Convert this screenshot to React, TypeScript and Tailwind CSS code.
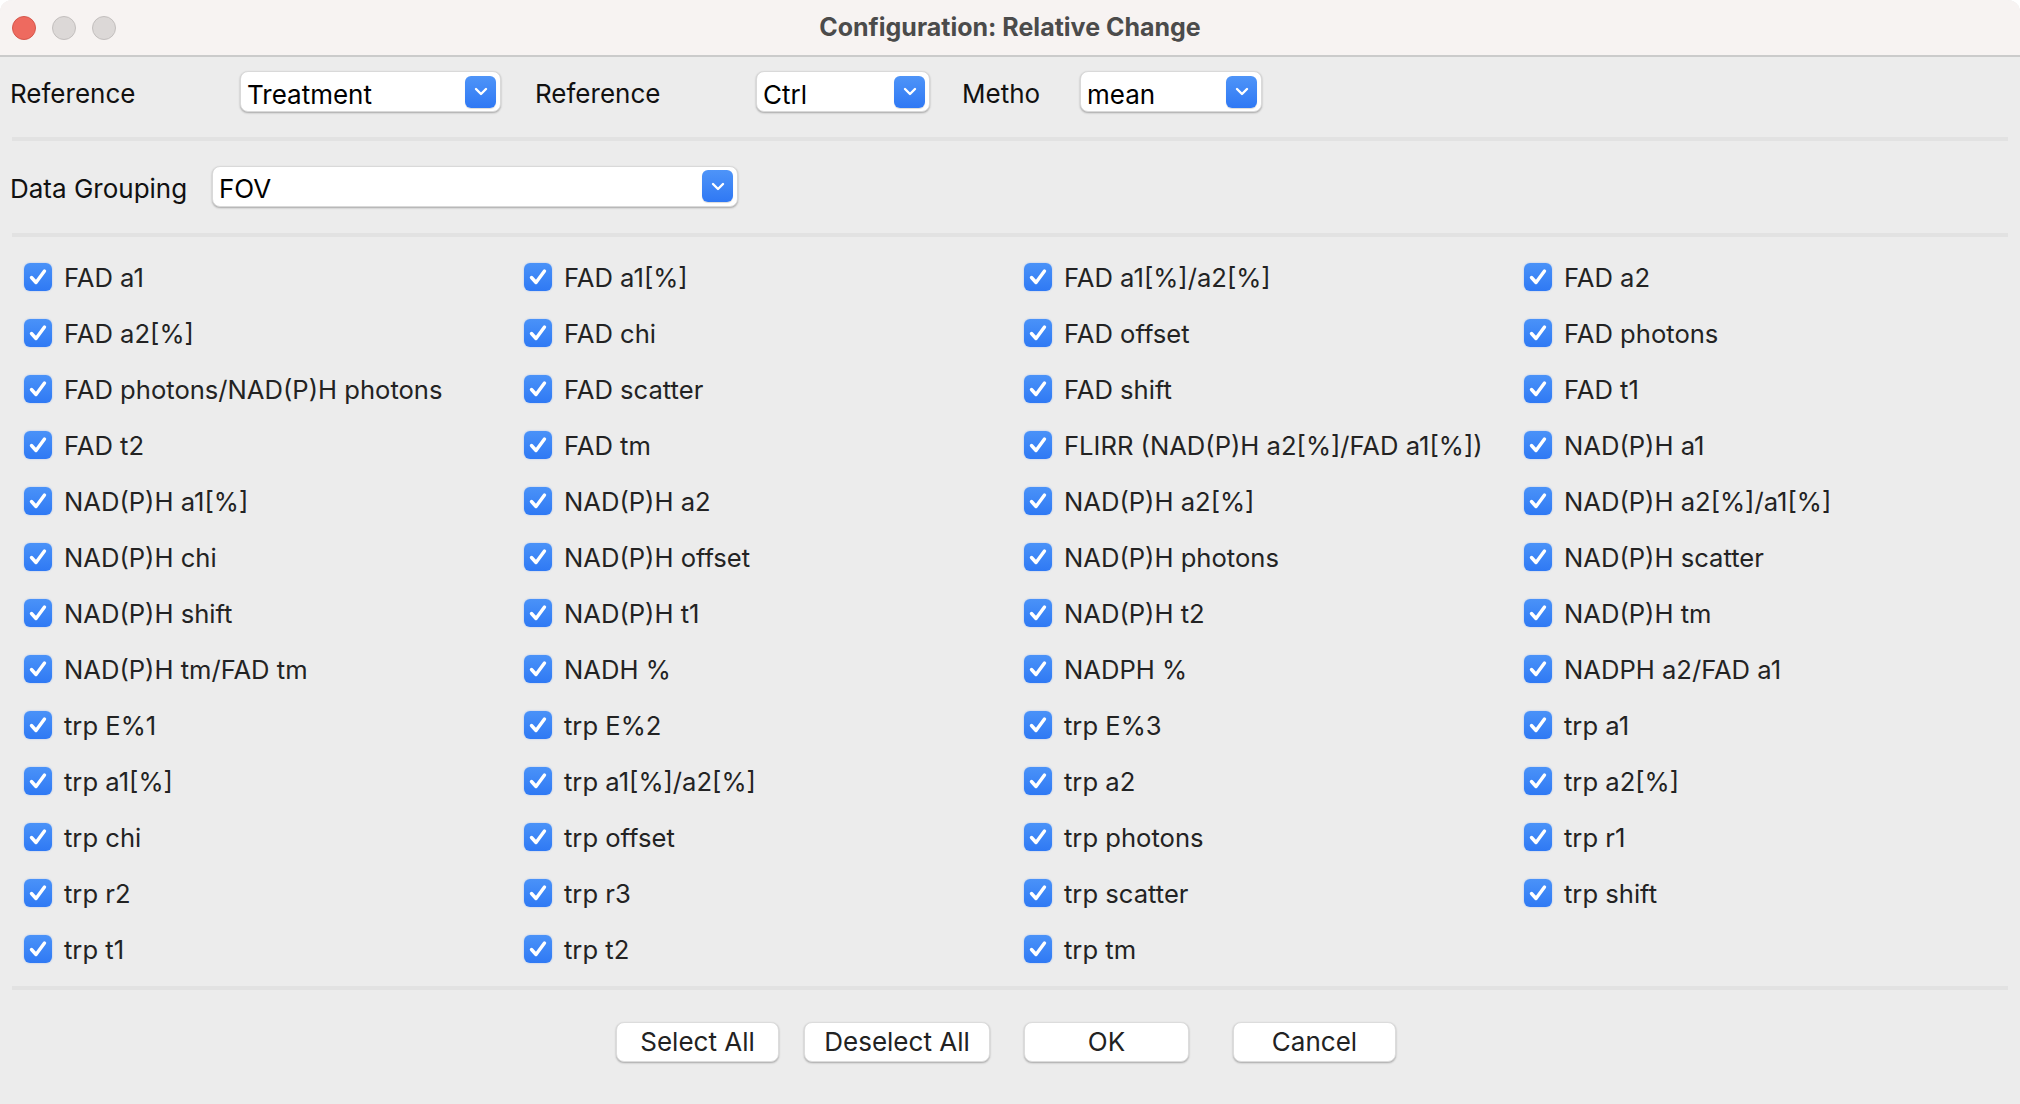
import React from 'react';

const rows: (string | null)[][] = [
  ['FAD a1', 'FAD a1[%]', 'FAD a1[%]/a2[%]', 'FAD a2'],
  ['FAD a2[%]', 'FAD chi', 'FAD offset', 'FAD photons'],
  ['FAD photons/NAD(P)H photons', 'FAD scatter', 'FAD shift', 'FAD t1'],
  ['FAD t2', 'FAD tm', 'FLIRR (NAD(P)H a2[%]/FAD a1[%])', 'NAD(P)H a1'],
  ['NAD(P)H a1[%]', 'NAD(P)H a2', 'NAD(P)H a2[%]', 'NAD(P)H a2[%]/a1[%]'],
  ['NAD(P)H chi', 'NAD(P)H offset', 'NAD(P)H photons', 'NAD(P)H scatter'],
  ['NAD(P)H shift', 'NAD(P)H t1', 'NAD(P)H t2', 'NAD(P)H tm'],
  ['NAD(P)H tm/FAD tm', 'NADH %', 'NADPH %', 'NADPH a2/FAD a1'],
  ['trp E%1', 'trp E%2', 'trp E%3', 'trp a1'],
  ['trp a1[%]', 'trp a1[%]/a2[%]', 'trp a2', 'trp a2[%]'],
  ['trp chi', 'trp offset', 'trp photons', 'trp r1'],
  ['trp r2', 'trp r3', 'trp scatter', 'trp shift'],
  ['trp t1', 'trp t2', 'trp tm', null],
];

function Chevron() {
  return (
    <svg width="14" height="9" viewBox="0 0 14 9" fill="none">
      <path d="M2 2 L7 7 L12 2" stroke="white" strokeWidth="2.4" strokeLinecap="round" strokeLinejoin="round" />
    </svg>
  );
}

function Select({ value, width }: { value: string; width: string }) {
  return (
    <div
      className={`${width} h-[41px] flex items-center justify-between bg-white rounded-[8px] border border-[#d9d9d9] shadow-[0_1px_2px_rgba(0,0,0,0.3)] pl-[6px] pr-[4px]`}
    >
      <span className="text-[26px] leading-none text-black pt-[6px]">{value}</span>
      <div className="w-[31px] h-[32px] rounded-[6px] bg-gradient-to-b from-[#4e94f8] to-[#2f78f4] flex items-center justify-center shadow-[0_1px_1px_rgba(0,0,0,0.15)]">
        <Chevron />
      </div>
    </div>
  );
}

function CheckBox() {
  return (
    <div className="w-[28px] h-[28px] rounded-[6px] bg-gradient-to-b from-[#4a92f8] to-[#2f79f4] flex items-center justify-center shadow-[0_0_2px_rgba(47,121,244,0.4)]">
      <svg width="20" height="18" viewBox="0 0 20 18" fill="none">
        <path d="M3.5 9.5 L8 14.5 L16.5 3" stroke="white" strokeWidth="3.4" strokeLinecap="round" strokeLinejoin="round" />
      </svg>
    </div>
  );
}

function Separator() {
  return <div className="mx-[12px] h-[4px] bg-[#e2e2e2]" />;
}

function Button({ label, width, className = '' }: { label: string; width: string; className?: string }) {
  return (
    <button
      className={`${width} h-[40px] bg-white rounded-[8px] border border-[#dcdcdc] shadow-[0_1px_2px_rgba(0,0,0,0.3)] text-[26px] leading-none text-[#222] ${className}`}
    >
      {label}
    </button>
  );
}

export default function App() {
  return (
    <div className="w-[2020px] h-[1104px] bg-white" style={{ fontFamily: 'Inter, "Liberation Sans", sans-serif' }}>
      <div className="w-full h-full rounded-t-[12px] overflow-hidden bg-[#ececec] flex flex-col">
        {/* Title bar */}
        <div className="relative h-[57px] shrink-0 bg-[#f7f3f2] border-b-[2px] border-[#cbcbcb] flex items-center justify-center">
          <div className="absolute left-[12px] top-[16px] flex gap-[16px]">
            <div className="w-[24px] h-[24px] rounded-full bg-[#ee6a5f] border border-[#d5574c]" />
            <div className="w-[24px] h-[24px] rounded-full bg-[#dcd8d7] border border-[#c3bfbe]" />
            <div className="w-[24px] h-[24px] rounded-full bg-[#dcd8d7] border border-[#c3bfbe]" />
          </div>
          <span className="text-[25px] font-bold text-[#4b4b4b] pt-[1px]">Configuration: Relative Change</span>
        </div>

        {/* Reference row */}
        <div className="flex items-center pl-[10px] mt-[14px] h-[41px] text-[26px] text-[#111]">
          <span className="w-[230px] pt-[3px]">Reference</span>
          <Select value="Treatment" width="w-[261px]" />
          <span className="ml-[34px] w-[221px] pt-[3px]">Reference</span>
          <Select value="Ctrl" width="w-[174px]" />
          <span className="ml-[32px] w-[118px] pt-[3px]">Metho</span>
          <Select value="mean" width="w-[182px]" />
        </div>

        <div className="mt-[25px]">
          <Separator />
        </div>

        {/* Data grouping */}
        <div className="flex items-center pl-[10px] mt-[25px] h-[40px] text-[26px] text-[#111]">
          <span className="w-[202px] pt-[4px]">Data Grouping</span>
          <Select value="FOV" width="w-[526px]" />
        </div>

        <div className="mt-[27px]">
          <Separator />
        </div>

        {/* Checkboxes */}
        <div className="pl-[24px] mt-[12px] grid grid-cols-[500px_500px_500px_500px]">
          {rows.flat().map((label, i) => (
            <div key={i} className="h-[56px] flex items-center">
              {label && (
                <>
                  <CheckBox />
                  <span className="ml-[12px] text-[25.6px] text-[#232323] leading-none pt-[2px]">{label}</span>
                </>
              )}
            </div>
          ))}
        </div>

        <div className="mt-[9px]">
          <Separator />
        </div>

        {/* Buttons */}
        <div className="flex pl-[616px] mt-[32px]">
          <Button label="Select All" width="w-[163px]" />
          <Button label="Deselect All" width="w-[186px]" className="ml-[25px]" />
          <Button label="OK" width="w-[165px]" className="ml-[34px]" />
          <Button label="Cancel" width="w-[163px]" className="ml-[44px]" />
        </div>
      </div>
    </div>
  );
}
